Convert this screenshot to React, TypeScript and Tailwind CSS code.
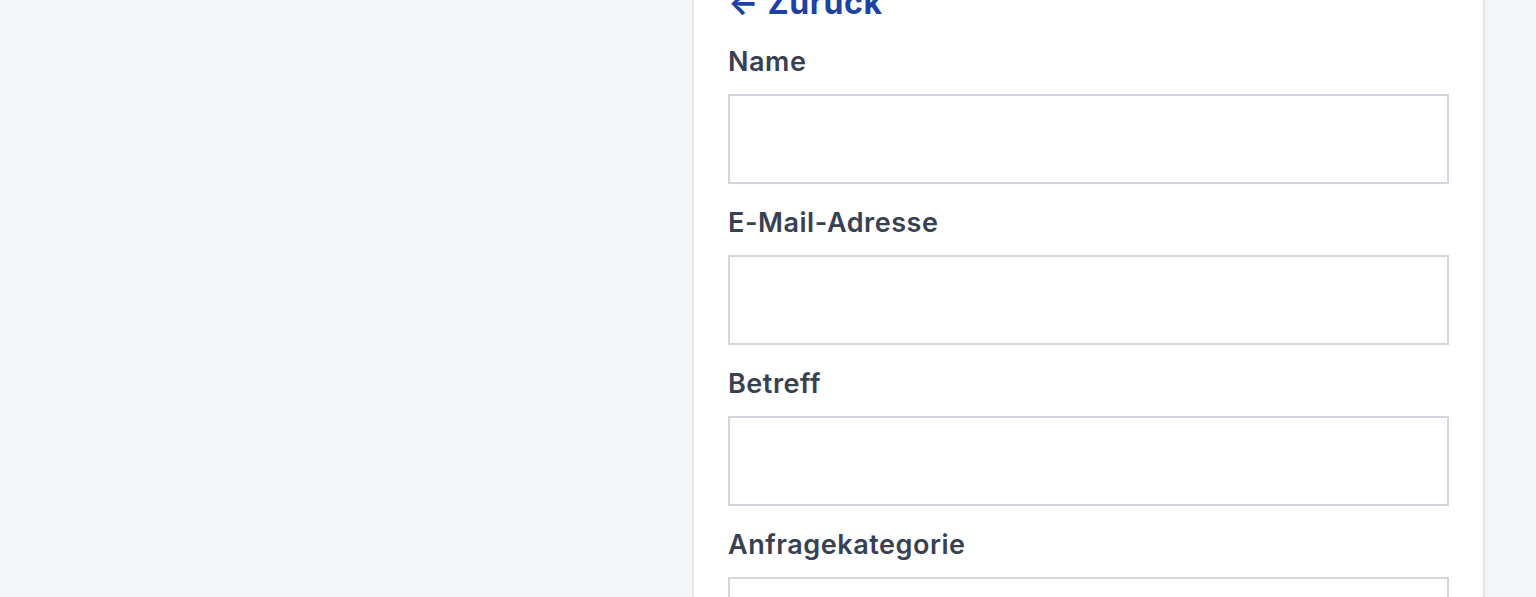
export default function App() {
  const fields = ['Name', 'E-Mail-Adresse', 'Betreff', 'Anfragekategorie'];
  return (
    <main
      className="h-[597px] overflow-hidden bg-[#f5f6fa] flex justify-end pr-[51px]"
      style={{ fontFamily: 'Inter, "Noto Sans", sans-serif' }}
    >
      <div className="w-[793px] h-[700px] bg-white border-x-2 border-[#e3e5ea] px-[34px] -mt-[16px]">
        <a href="#" className="block text-[32px] leading-[38px] font-bold tracking-[0.02em] text-[#1e429f] mb-[21px]">
          ← Zurück
        </a>
        <form className="flex flex-col gap-[20px]">
          {fields.map((f) => (
            <div key={f} className="flex flex-col">
              <label className="text-[27px] leading-[38px] font-semibold tracking-[0.02em] text-[#374151] mb-[13px]">{f}</label>
              <input className="h-[90px] w-full border-2 border-[#d3d6dc] bg-white outline-none" />
            </div>
          ))}
        </form>
      </div>
    </main>
  );
}
